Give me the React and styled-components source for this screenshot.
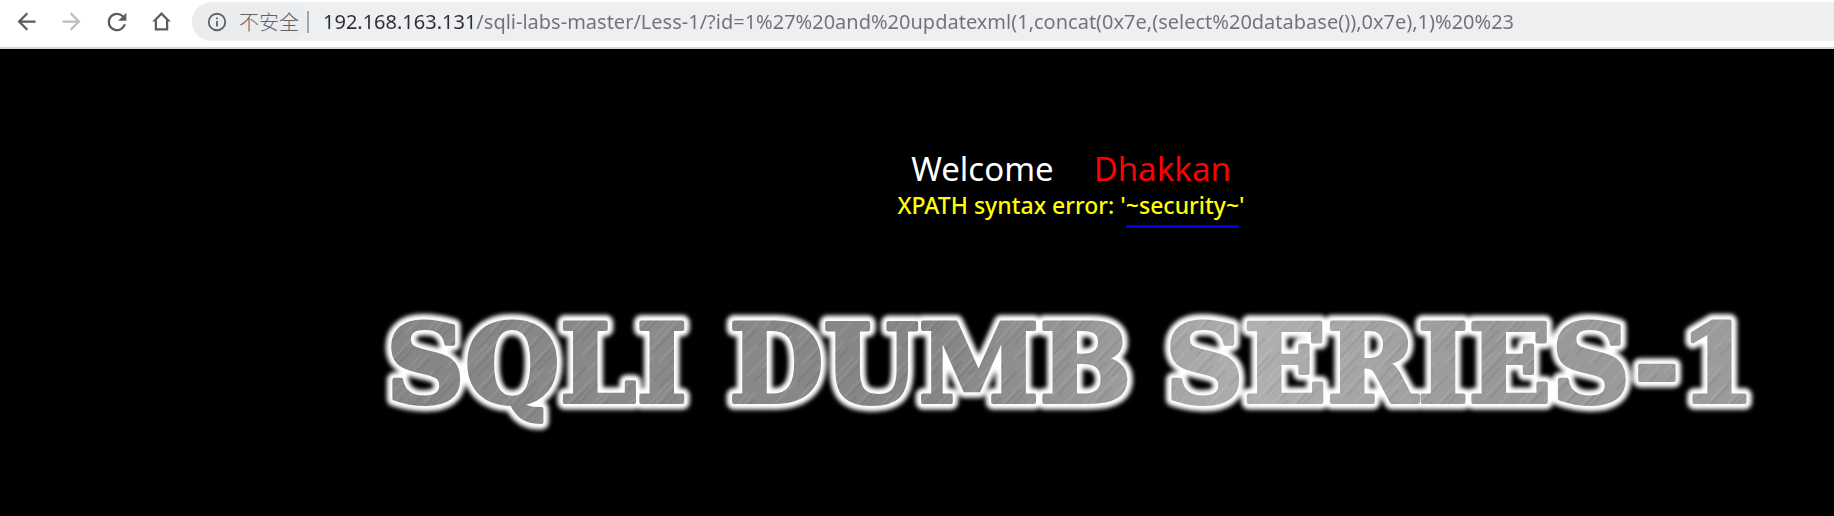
import React from "react";
import styled, { createGlobalStyle } from "styled-components";

const GlobalStyle = createGlobalStyle`
  html, body { margin: 0; background: #000; }
  body { font-family: "Noto Sans", "Noto Sans CJK SC", sans-serif; overflow-x: hidden; }
  #root { min-height: 100vh; }
`;

const Toolbar = styled.header`
  display: flex;
  align-items: center;
  padding: 2px 0 6px 4px;
  background: #fff;
  border-bottom: 2px solid #d5d8dc;
`;

const NavButton = styled.button`
  display: grid;
  place-items: center;
  width: 45px;
  height: 39px;
  padding: 0;
  border: 0;
  background: none;
  color: ${(p) => (p.disabled ? "#bdbfc2" : "#5a5d61")};
`;

const Icon = styled.svg`
  display: block;
  width: ${(p) => p.$size}px;
  height: ${(p) => p.$size}px;
  fill: currentColor;
`;

const AddressBar = styled.div`
  flex: 1;
  display: flex;
  align-items: center;
  min-width: 0;
  height: 39px;
  margin-left: 8px;
  border-radius: 20px 0 0 20px;
  background: #eeeff1;
`;

const SiteInfo = styled.button`
  display: flex;
  align-items: center;
  gap: 11px;
  height: 37px;
  padding: 0 8px 0 14px;
  border: 0;
  border-radius: 19px;
  background: #ebecee;
  color: #5f6368;
  font: 300 20px "Noto Sans CJK SC", sans-serif;
  white-space: nowrap;
`;

const Divider = styled.span`
  width: 2px;
  height: 22px;
  background: #a3a6aa;
`;

const UrlInput = styled.input`
  flex: 1;
  min-width: 0;
  height: 30px;
  margin-left: 14px;
  padding: 0;
  border: 0;
  outline: 0;
  font: 20px "Noto Sans", sans-serif;
  color: #707276;
  background: linear-gradient(to right, #2b2d30 152px, #707276 152px);
  background-clip: text;
  -webkit-text-fill-color: transparent;
`;

const Page = styled.main`
  display: flex;
  flex-direction: column;
  align-items: center;
  padding: 96px 0 0 308px;
  text-align: center;
`;

const Welcome = styled.h1`
  display: flex;
  gap: 40px;
  margin: 0;
  font-size: 33px;
  line-height: 48px;
  font-weight: 400;
  color: #fff;
`;

const Name = styled.span`
  color: #f00;
`;

const ErrorMessage = styled.p`
  margin: 0;
  font-size: 23px;
  line-height: 24px;
  font-weight: 500;
  color: #ff0;
`;

const Marked = styled.span`
  padding-bottom: 4px;
  border-bottom: 3px solid #0000e8;
`;

const Banner = styled.svg`
  display: block;
  width: 1400px;
  height: 140px;
  margin-top: 83px;
  font-family: "DejaVu Serif", serif;
  font-weight: 700;
  font-size: 109px;
`;

const WORDS = [
  { x: 15, text: "SQLI" },
  { x: 358, text: "DUMB" },
  { x: 794, text: "SERIES-1" },
];

function BannerWords(props) {
  return (
    <g strokeLinejoin="round" {...props}>
      {WORDS.map((w) => (
        <text key={w.text} x={w.x} y="102">{w.text}</text>
      ))}
    </g>
  );
}

export default function App() {
  return (
    <>
      <GlobalStyle />
      <Toolbar>
        <NavButton aria-label="Back">
          <Icon $size={27} viewBox="0 0 24 24"><path d="M20 11H7.83l5.59-5.59L12 4l-8 8 8 8 1.41-1.41L7.83 13H20z" /></Icon>
        </NavButton>
        <NavButton aria-label="Forward" disabled>
          <Icon $size={27} viewBox="0 0 24 24"><path d="M12 4l-1.41 1.41L16.17 11H4v2h12.17l-5.58 5.59L12 20l8-8z" /></Icon>
        </NavButton>
        <NavButton aria-label="Reload">
          <Icon $size={28} viewBox="0 0 24 24"><path d="M17.65 6.35A7.96 7.96 0 0 0 12 4a8 8 0 1 0 7.73 10h-2.08A6 6 0 1 1 12 6c1.66 0 3.14.69 4.22 1.78L13 11h7V4z" /></Icon>
        </NavButton>
        <NavButton aria-label="Home">
          <Icon $size={27} viewBox="0 0 24 24"><path d="M12 3.6l-8.3 8.4H6v8h12v-8h2.3zm0 2.8l4 4V18H8v-7.6z" /></Icon>
        </NavButton>
        <AddressBar>
          <SiteInfo>
            <Icon $size={22} viewBox="0 0 24 24"><path d="M11 7h2v2h-2zm0 4h2v6h-2zm1-9a10 10 0 1 0 0 20 10 10 0 0 0 0-20zm0 18a8 8 0 1 1 0-16 8 8 0 0 1 0 16z" /></Icon>
            不安全
          </SiteInfo>
          <Divider />
          <UrlInput
            aria-label="Address"
            spellCheck={false}
            defaultValue="192.168.163.131/sqli-labs-master/Less-1/?id=1%27%20and%20updatexml(1,concat(0x7e,(select%20database()),0x7e),1)%20%23"
          />
        </AddressBar>
      </Toolbar>
      <Page>
        <Welcome>
          <span>Welcome</span>
          <Name>Dhakkan</Name>
        </Welcome>
        <ErrorMessage>
          XPATH syntax error: '<Marked>~security~</Marked>'
        </ErrorMessage>
        <Banner viewBox="0 0 1400 140" role="img" aria-label="SQLI DUMB SERIES-1">
          <defs>
            <linearGradient id="steel" x1="0" y1="0" x2="1400" y2="0" gradientUnits="userSpaceOnUse">
              <stop offset="0" stopColor="#858585" />
              <stop offset="0.2" stopColor="#8a8a8a" />
              <stop offset="0.4" stopColor="#858585" />
              <stop offset="0.5" stopColor="#959595" />
              <stop offset="0.63" stopColor="#b0b0b0" />
              <stop offset="0.8" stopColor="#989898" />
              <stop offset="1" stopColor="#9c9c9c" />
            </linearGradient>
            <pattern id="brushed" width="1400" height="140" patternUnits="userSpaceOnUse">
              <rect width="1400" height="140" fill="url(#steel)" />
              <rect width="1400" height="140" fill="url(#scratches)" />
            </pattern>
            <pattern id="scratches" width="53" height="97" patternUnits="userSpaceOnUse" patternTransform="rotate(43)">
              <path d="M3 0V40M9 50V90M14 30V75M21 5V30M26 0V50M33 42V90M41 10V44M48 60V97" stroke="#fff" strokeOpacity="0.16" />
              <path d="M6 10V60M11 0V35M18 44V90M24 55V80M30 5V40M37 50V85M44 0V35M50 30V60" stroke="#000" strokeOpacity="0.12" />
            </pattern>
            <filter id="glow" x="-5%" y="-20%" width="110%" height="140%">
              <feGaussianBlur stdDeviation="2" />
            </filter>
          </defs>
          <BannerWords fill="#fff" stroke="#fff" strokeWidth="15" filter="url(#glow)" aria-hidden="true" />
          <BannerWords fill="url(#brushed)" stroke="url(#brushed)" strokeWidth="4" />
        </Banner>
      </Page>
    </>
  );
}
